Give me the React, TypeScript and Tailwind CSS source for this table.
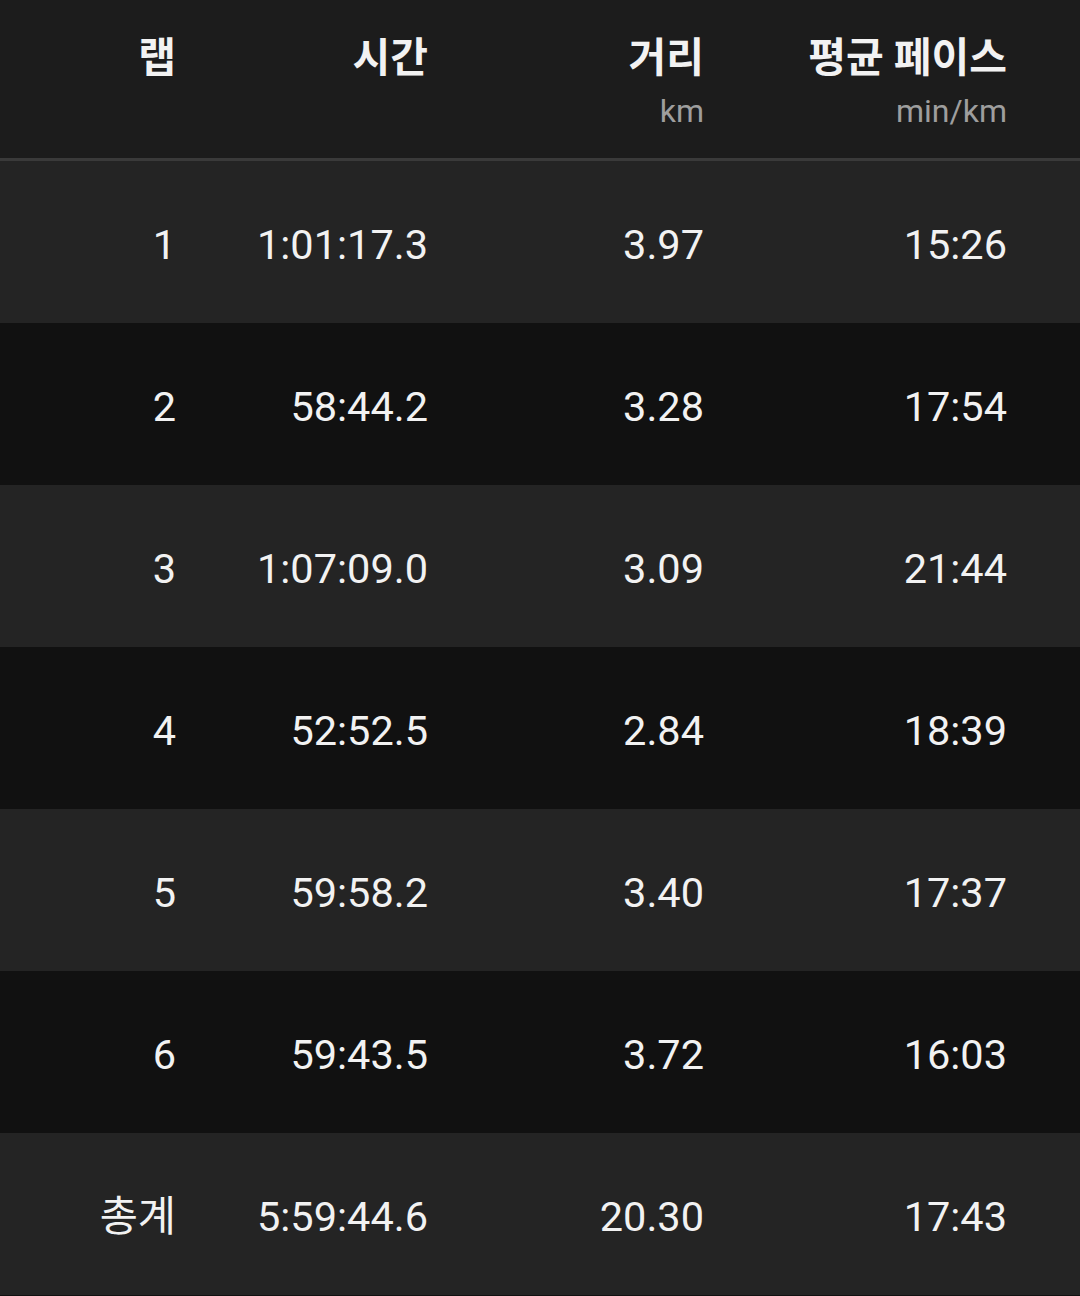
const rows = [
  ["1", "1:01:17.3", "3.97", "15:26"],
  ["2", "58:44.2", "3.28", "17:54"],
  ["3", "1:07:09.0", "3.09", "21:44"],
  ["4", "52:52.5", "2.84", "18:39"],
  ["5", "59:58.2", "3.40", "17:37"],
  ["6", "59:43.5", "3.72", "16:03"],
  ["총계", "5:59:44.6", "20.30", "17:43"],
];

function Cells({ cells }: { cells: string[] }) {
  return (
    <>
      <div className="w-[176px] text-right">{cells[0]}</div>
      <div className="w-[252px] text-right">{cells[1]}</div>
      <div className="w-[276px] text-right">{cells[2]}</div>
      <div className="w-[303px] text-right">{cells[3]}</div>
    </>
  );
}

export default function App() {
  return (
    <div className="w-[1080px] h-[1296px] overflow-hidden bg-[#111111] text-[#f2f2f2] font-['Roboto','Noto_Sans_CJK_KR',sans-serif]">
      <div className="h-[158px] bg-[#1c1c1c] flex pt-[34px]">
        <div className="w-[176px] text-right text-[41px] leading-[48px] font-bold">랩</div>
        <div className="w-[252px] text-right text-[41px] leading-[48px] font-bold">시간</div>
        <div className="w-[276px] text-right">
          <div className="text-[41px] leading-[48px] font-bold">거리</div>
          <div className="text-[32px] leading-[40px] text-[#9e9e9e] mt-[9px]">km</div>
        </div>
        <div className="w-[303px] text-right">
          <div className="text-[41px] leading-[48px] font-bold">평균 페이스</div>
          <div className="text-[32px] leading-[40px] text-[#9e9e9e] mt-[9px]">min/km</div>
        </div>
      </div>
      <div className="h-[3px] bg-[#3a3a3a]" />
      {rows.map((r, i) => (
        <div
          key={i}
          className={
            "h-[162px] flex items-center pt-[7px] text-[41.5px] " +
            (i % 2 === 0 ? "bg-[#242424]" : "bg-[#111111]")
          }
        >
          <Cells cells={r} />
        </div>
      ))}
    </div>
  );
}
